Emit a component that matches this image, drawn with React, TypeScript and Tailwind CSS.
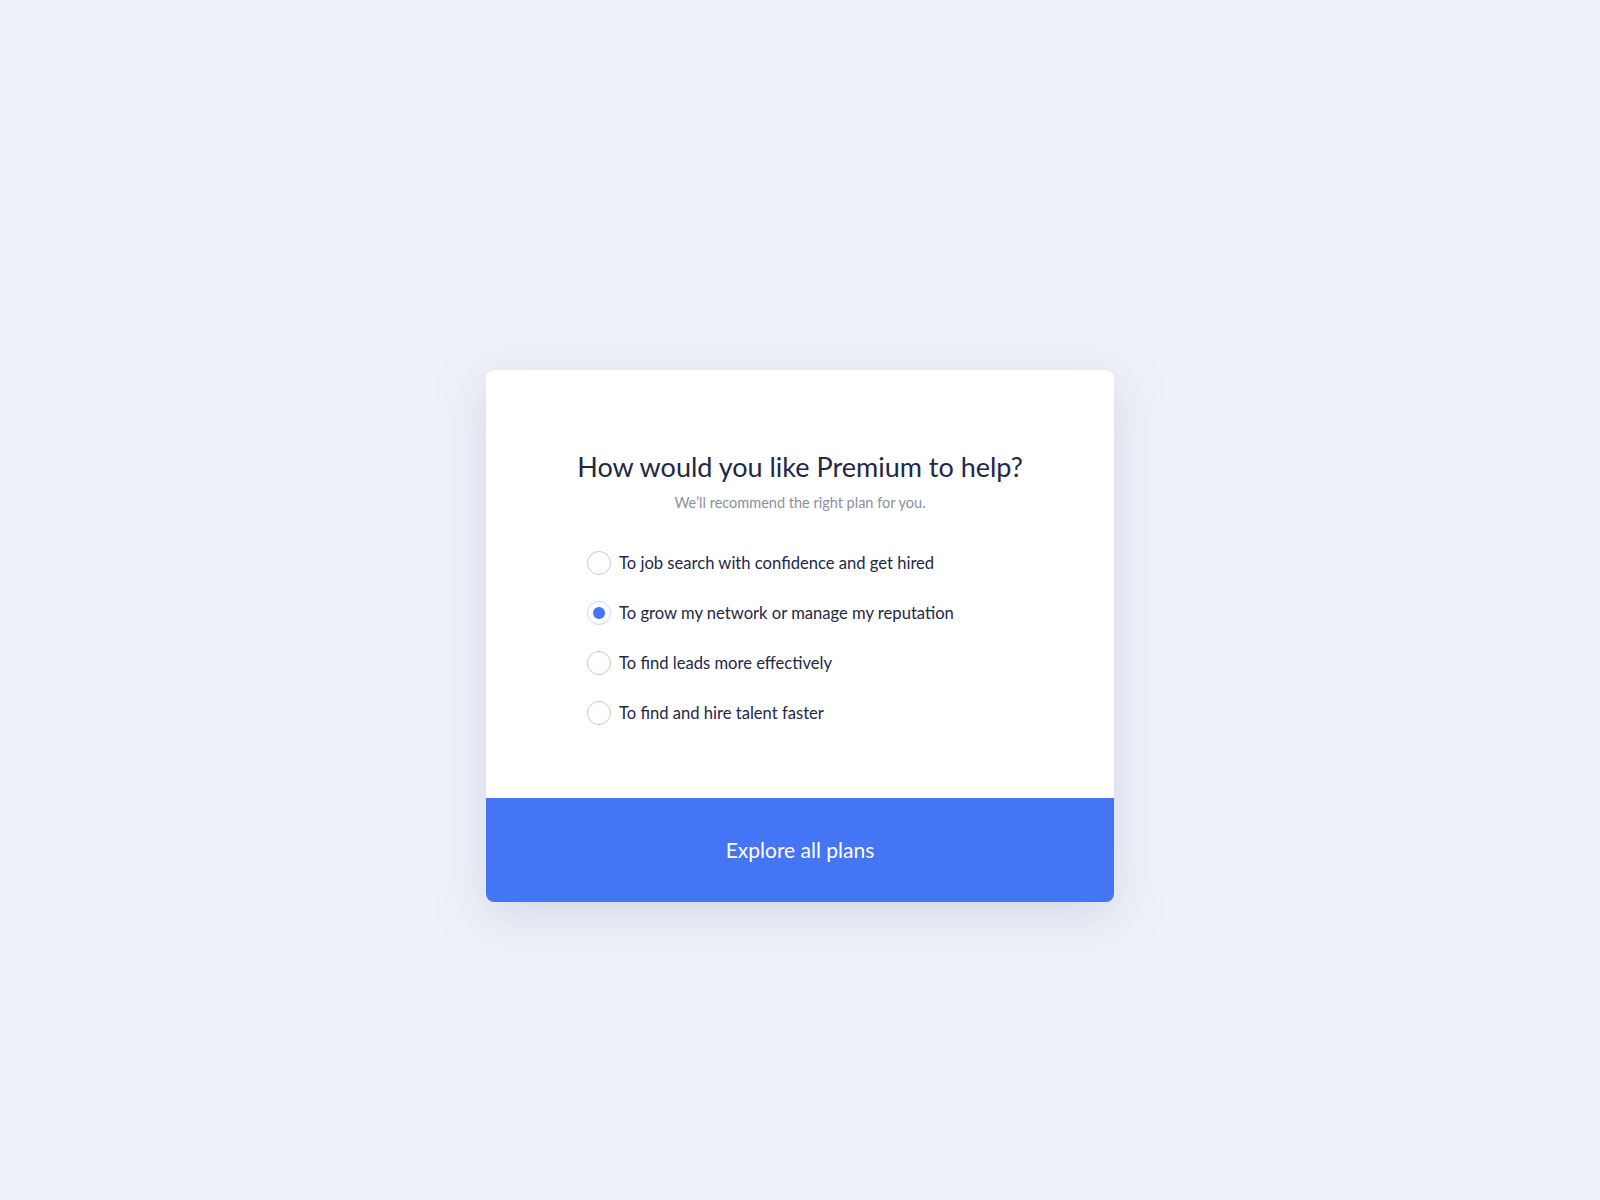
import { useState } from "react"

const options = [
  "To job search with confidence and get hired",
  "To grow my network or manage my reputation",
  "To find leads more effectively",
  "To find and hire talent faster",
]

export default function App() {
  const [selected, setSelected] = useState(1)

  return (
    <main
      className="min-h-screen bg-[#eff1f9] flex flex-col items-center pt-[370px]"
      style={{ fontFamily: "Lato, 'Noto Sans', sans-serif" }}
    >
      <div className="w-[628px] bg-white rounded-[8px] overflow-hidden shadow-[0_12px_48px_rgba(160,170,200,0.35)]">
        <div className="pt-[80px] pb-[73px]">
          <h1 className="text-center whitespace-nowrap text-[27px] leading-[34px] text-[#1e2847]">
            How would you like Premium to help?
          </h1>
          <p className="text-center text-[14.5px] leading-[20px] text-[#8b90a1] mt-[9px]">
            We’ll recommend the right plan for you.
          </p>

          <ul className="mt-[38px] px-[101px] flex flex-col gap-[26px]">
            {options.map((label, i) => (
              <li key={label}>
                <button
                  onClick={() => setSelected(i)}
                  className="flex items-center gap-[8px] h-[24px] text-left"
                >
                  <span
                    className={
                      i === selected
                        ? "w-[24px] h-[24px] rounded-full border border-[#c9d7fb] flex items-center justify-center"
                        : "w-[24px] h-[24px] rounded-full border border-[#c8c8cc]"
                    }
                  >
                    {i === selected && (
                      <span className="w-[12px] h-[12px] rounded-full bg-[#4375f5]" />
                    )}
                  </span>
                  <span className="text-[16.6px] text-[#1e2847]">{label}</span>
                </button>
              </li>
            ))}
          </ul>
        </div>

        <button className="w-full h-[104px] bg-[#4375f5] text-white text-[21px]">
          Explore all plans
        </button>
      </div>
    </main>
  )
}
